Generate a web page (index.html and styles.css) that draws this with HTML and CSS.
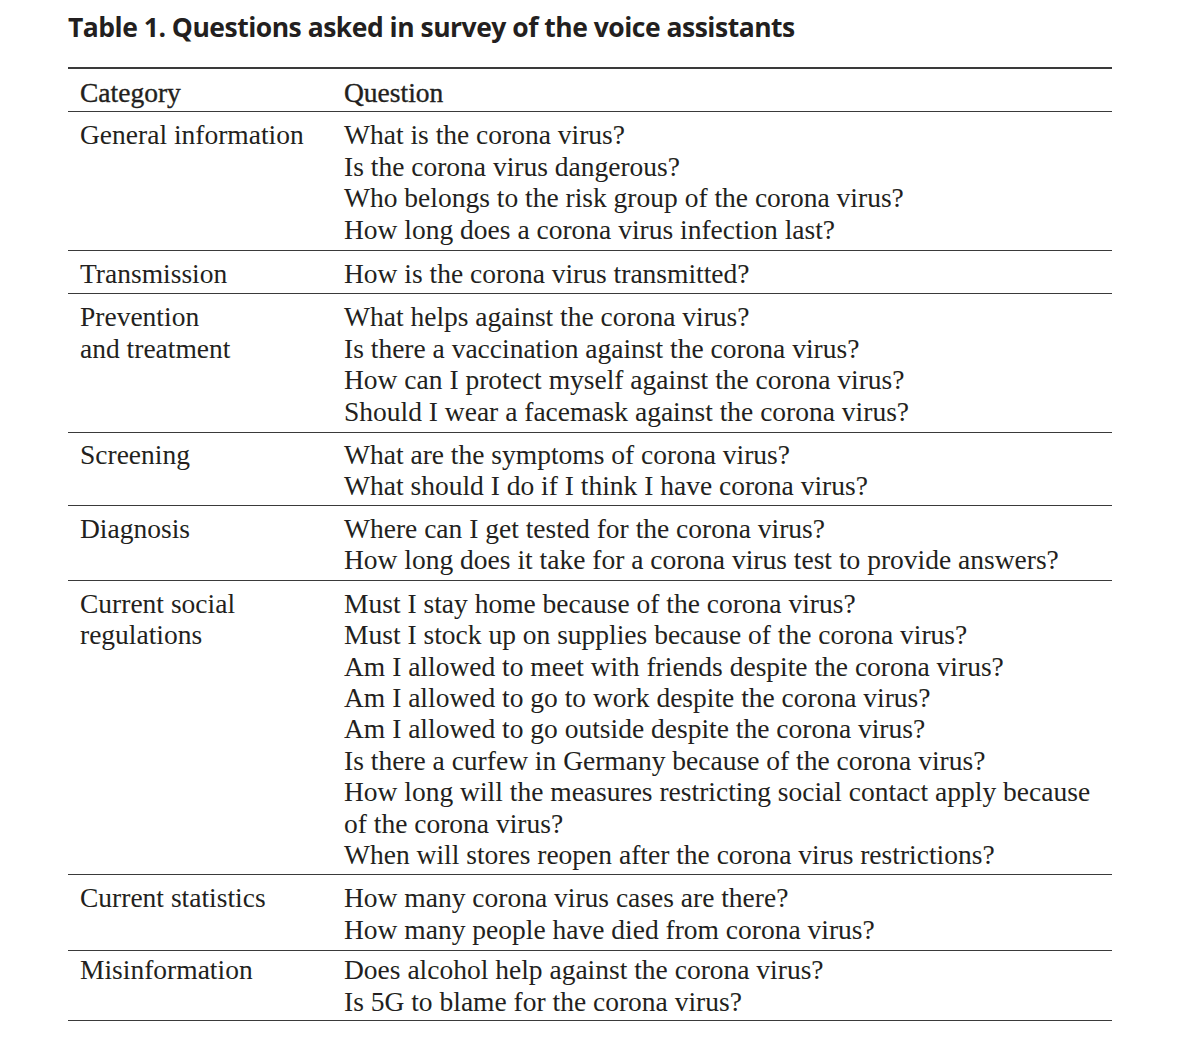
FILE: index.html
```html
<!DOCTYPE html>
<html>
<head>
<meta charset="utf-8">
<link rel="stylesheet" href="styles.css">
</head>
<body>
<div class="page">
  <h1 class="title">Table 1. Questions asked in survey of the voice assistants</h1>
  <table class="qtable">
    <thead>
      <tr><th class="cat">Category</th><th class="q">Question</th></tr>
    </thead>
    <tbody>
      <tr class="loose"><td class="cat">General information</td><td class="q">What is the corona virus?<br>Is the corona virus dangerous?<br>Who belongs to the risk group of the corona virus?<br>How long does a corona virus infection last?</td></tr>
      <tr><td class="cat">Transmission</td><td class="q">How is the corona virus transmitted?</td></tr>
      <tr class="loose"><td class="cat">Prevention<br>and treatment</td><td class="q">What helps against the corona virus?<br>Is there a vaccination against the corona virus?<br>How can I protect myself against the corona virus?<br>Should I wear a facemask against the corona virus?</td></tr>
      <tr class="tight"><td class="cat">Screening</td><td class="q">What are the symptoms of corona virus?<br>What should I do if I think I have corona virus?</td></tr>
      <tr><td class="cat">Diagnosis</td><td class="q">Where can I get tested for the corona virus?<br>How long does it take for a corona virus test to provide answers?</td></tr>
      <tr><td class="cat">Current social<br>regulations</td><td class="q">Must I stay home because of the corona virus?<br>Must I stock up on supplies because of the corona virus?<br>Am I allowed to meet with friends despite the corona virus?<br>Am I allowed to go to work despite the corona virus?<br>Am I allowed to go outside despite the corona virus?<br>Is there a curfew in Germany because of the corona virus?<br>How long will the measures restricting social contact apply because<br>of the corona virus?<br>When will stores reopen after the corona virus restrictions?</td></tr>
      <tr class="loose"><td class="cat">Current statistics</td><td class="q">How many corona virus cases are there?<br>How many people have died from corona virus?</td></tr>
      <tr class="last"><td class="cat">Misinformation</td><td class="q">Does alcohol help against the corona virus?<br>Is 5G to blame for the corona virus?</td></tr>
    </tbody>
  </table>
</div>
</body>
</html>
```
FILE: styles.css
```css
html, body {
  margin: 0;
  padding: 0;
  background: #ffffff;
}
.page {
  padding: 10px 0 0 68px;
  width: 1044px;
}
.title {
  margin: 0 0 23px 0;
  font-family: "Open Sans", "DejaVu Sans", sans-serif;
  font-weight: 700;
  font-size: 26.5px;
  line-height: 34px;
  letter-spacing: -0.5px;
  color: #231f20;
}
.qtable {
  width: 1044px;
  border-collapse: collapse;
  font-family: "Liberation Serif", "Times New Roman", serif;
  font-size: 27.5px;
  line-height: 31.4px;
  color: #231f20;
  border-top: 2px solid #3a3a3a;
}
.qtable th,
.qtable td {
  text-align: left;
  vertical-align: top;
  padding: 7px 0 4px 0;
  font-weight: normal;
  border-bottom: 1.5px solid #3a3a3a;
}
.qtable th {
  -webkit-text-stroke: 0.35px #231f20;
  padding: 8px 0 3px 0;
}
.qtable .loose td {
  padding-bottom: 5px;
}
.qtable .tight td {
  padding-top: 6px;
  padding-bottom: 3px;
}
.qtable .last td {
  padding-top: 3px;
  padding-bottom: 3px;
}
.qtable .cat {
  width: 264px;
  padding-left: 12px;
}
.qtable .q {
  padding-left: 0;
}
```
